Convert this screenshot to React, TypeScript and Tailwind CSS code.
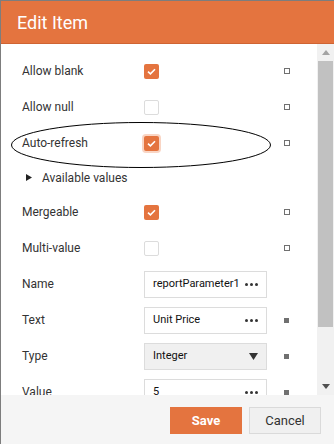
import { ReactNode } from "react";

const font = { fontFamily: "Roboto, 'Liberation Sans', Arial, sans-serif" };

function Check({ checked, focus }: { checked?: boolean; focus?: boolean }) {
  if (!checked)
    return <div className="w-[15px] h-[15px] rounded-[2px] border border-[#dcdcdc] bg-white" />;
  return (
    <div
      className={
        "w-[15px] h-[15px] rounded-[2px] bg-[#e4743f] flex items-center justify-center " +
        (focus ? "shadow-[0_0_0_2px_#f9d5c4]" : "")
      }
    >
      <svg width="9" height="7" viewBox="0 0 9 7">
        <path d="M1 3.6 L3.4 5.8 L8 1.2" stroke="#fff" strokeWidth="1.6" fill="none" />
      </svg>
    </div>
  );
}

function Marker({ filled }: { filled?: boolean }) {
  return filled ? (
    <div className="w-[5px] h-[5px] bg-[#707070] ml-[16px]" />
  ) : (
    <div className="w-[6px] h-[6px] border border-[#707070] ml-[16px]" />
  );
}

function Row({ label, children, marker }: { label: string; children: ReactNode; marker?: "o" | "f" }) {
  return (
    <div className="flex items-center h-9">
      <div className="w-[122px] text-[12px] text-[#333]">{label}</div>
      <div className="w-[124px] flex items-center">{children}</div>
      {marker === "o" && <Marker />}
      {marker === "f" && <Marker filled />}
    </div>
  );
}

function Field({ value, select }: { value: string; select?: boolean }) {
  return (
    <div
      className={
        "w-[123px] h-[27px] border border-[#dcdcdc] flex items-center justify-between pl-[8px] pr-[8px] text-[11px] text-[#111] " +
        (select ? "bg-[#f0f0f0]" : "bg-white")
      }
    >
      <span>{value}</span>
      {select ? (
        <svg width="9" height="7" viewBox="0 0 9 7">
          <path d="M0 0 H9 L4.5 7 Z" fill="#333" />
        </svg>
      ) : (
        <span className="flex gap-[2px]">
          <span className="w-[3px] h-[3px] rounded-full bg-[#333]" />
          <span className="w-[3px] h-[3px] rounded-full bg-[#333]" />
          <span className="w-[3px] h-[3px] rounded-full bg-[#333]" />
        </span>
      )}
    </div>
  );
}

export default function App() {
  return (
    <div style={font} className="w-[334px] h-[444px] flex flex-col border-l border-t border-[#7d7d7d] bg-white overflow-hidden">
      <div className="h-[43px] shrink-0 bg-[#e4743f] border-b border-[#cf6433] flex items-center pl-[16px]">
        <span className="text-white text-[18px]">Edit Item</span>
      </div>
      <div className="flex flex-1 min-h-0">
        <div className="flex-1 overflow-hidden pl-[21px] pt-[9px] relative">
          <Row label="Allow blank" marker="o">
            <Check checked />
          </Row>
          <Row label="Allow null" marker="o">
            <Check />
          </Row>
          <Row label="Auto-refresh" marker="o">
            <Check checked focus />
          </Row>
          <div className="flex items-center h-[33px] pl-[4px] text-[12px] text-[#333]">
            <svg width="6" height="7" viewBox="0 0 6 7" className="mr-[10px]">
              <path d="M0 0 L6 3.5 L0 7 Z" fill="#222" />
            </svg>
            Available values
          </div>
          <Row label="Mergeable" marker="o">
            <Check checked />
          </Row>
          <Row label="Multi-value" marker="o">
            <Check />
          </Row>
          <Row label="Name">
            <Field value="reportParameter1" />
          </Row>
          <Row label="Text" marker="f">
            <Field value="Unit Price" />
          </Row>
          <Row label="Type" marker="f">
            <Field value="Integer" select />
          </Row>
          <Row label="Value" marker="f">
            <Field value="5" />
          </Row>
          <svg className="absolute left-[9px] top-[77px]" width="262" height="48" viewBox="0 0 262 48">
            <ellipse cx="131" cy="24" rx="129.5" ry="22.5" fill="none" stroke="#000" strokeWidth="1" />
          </svg>
        </div>
        <div className="w-[17px] shrink-0 bg-[#f1f1f1] flex flex-col items-center">
          <div className="h-[17px] flex items-center justify-center">
            <svg width="8" height="5" viewBox="0 0 8 5">
              <path d="M0 5 L4 0 L8 5 Z" fill="#a3a3a3" />
            </svg>
          </div>
          <div className="w-[15px] h-[266px] bg-[#c1c1c1]" />
          <div className="flex-1" />
          <div className="h-[17px] flex items-center justify-center">
            <svg width="8" height="5" viewBox="0 0 8 5">
              <path d="M0 0 L8 0 L4 5 Z" fill="#505050" />
            </svg>
          </div>
        </div>
      </div>
      <div className="h-[49px] shrink-0 bg-[#f5f5f5] flex items-start justify-end gap-[7px] pt-[12px] pr-[13px]">
        <button className="w-[72px] h-[27px] bg-[#e4743f] text-white text-[13px] font-bold">Save</button>
        <button className="w-[72px] h-[27px] bg-[#f0f0f0] border border-[#dadada] text-[#333] text-[13px]">Cancel</button>
      </div>
    </div>
  );
}
